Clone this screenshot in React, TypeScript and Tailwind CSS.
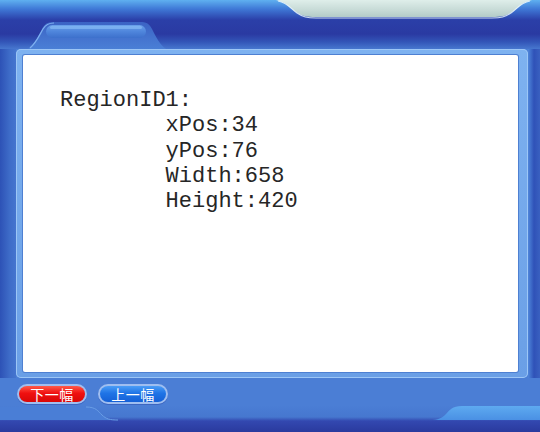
import React from 'react'

const lines = ['xPos:34', 'yPos:76', 'Width:658', 'Height:420']

function PillButton({ label, tone }: { label: string, tone: 'red' | 'blue' }) {
  const fill = tone === 'red'
    ? 'bg-[linear-gradient(to_bottom,#ff5a4a_0%,#f01010_45%,#d80808_100%)]'
    : 'bg-[linear-gradient(to_bottom,#4a9cf6_0%,#1f74e6_45%,#1560d6_100%)]'
  return (
    <div className="w-[70px] h-[20px] rounded-full bg-[#9fbef0] p-[2px] shadow-[0_1px_0_#3d66c0]">
      <div className={`h-full rounded-full ${fill} flex items-center justify-center text-white text-[14px] leading-none tracking-[0.5px] font-['Noto_Sans_CJK_SC',sans-serif]`}>
        {label}
      </div>
    </div>
  )
}

export default function App() {
  return (
    <div className="relative w-[540px] h-[432px] overflow-hidden bg-[#4b7ed5] font-['Liberation_Sans',sans-serif]">
      {/* top band */}
      <div className="relative h-[49px] bg-[linear-gradient(to_bottom,#5fb0f0_0px,#3f78d6_9px,#2b3fa8_20px,#2a3aa2_34px,#3356b8_42px,#4777cf_49px)]">
        {/* pale tab on the right */}
        <svg className="absolute left-[276px] top-0" width="256" height="20" viewBox="0 0 256 20">
          <defs>
            <linearGradient id="pale" x1="0" y1="0" x2="0" y2="1">
              <stop offset="0" stopColor="#dfeeea" />
              <stop offset="0.6" stopColor="#c6dad6" />
              <stop offset="1" stopColor="#b3cbc8" />
            </linearGradient>
          </defs>
          <path d="M0 0 C10 2 14 8 20 12 C26 16 30 17 40 17 L216 17 C226 17 230 16 236 12 C242 8 246 2 256 0 Z" fill="url(#pale)" />
          <path d="M2 1 C12 3 15 9 21 13 C27 17 31 18 40 18 L216 18 C225 18 229 17 235 13 C241 9 244 3 254 1" fill="none" stroke="#f4fbff" strokeWidth="1.2" opacity="0.8" />
        </svg>
        {/* left tab */}
        <svg className="absolute left-[28px] top-[21px]" width="138" height="28" viewBox="0 0 138 28">
          <defs>
            <linearGradient id="tab" x1="0" y1="0" x2="0" y2="1">
              <stop offset="0" stopColor="#3b63c4" />
              <stop offset="1" stopColor="#4a7fd6" />
            </linearGradient>
            <linearGradient id="bar" x1="0" y1="0" x2="0" y2="1">
              <stop offset="0" stopColor="#6aa0ea" />
              <stop offset="0.5" stopColor="#4f86dc" />
              <stop offset="1" stopColor="#3d70cc" />
            </linearGradient>
          </defs>
          <path d="M0 28 C6 24 10 16 14 8 C17 2 20 1 26 1 L112 1 C118 1 121 2 124 8 C128 16 132 24 138 28 Z" fill="url(#tab)" />
          <path d="M2 27 C8 22 11 15 15 8 C18 3 21 2 26 2" fill="none" stroke="#7fb0f0" strokeWidth="1.2" />
          <rect x="18" y="4" width="100" height="13" rx="6.5" fill="url(#bar)" />
          <rect x="22" y="5" width="92" height="3" rx="1.5" fill="#8cc0f6" opacity="0.6" />
        </svg>
      </div>

      {/* middle */}
      <div className="flex h-[329px]">
        <div className="w-[16px] bg-[linear-gradient(to_right,#2d52b6,#3e6cc8_60%,#4575cf)]" />
        <div className="w-[512px] rounded-[5px] bg-[linear-gradient(to_bottom,#7eb2f0,#6a9fe6)] pl-[7px] pt-[6px] pr-[10px] pb-[6px] shadow-[inset_0_0_0_1px_#9cc6f6]">
          <div className="h-full bg-white rounded-[2px] shadow-[0_0_0_1px_#4e80d2] pl-[37px] pt-[33px] text-[22px] leading-[25.25px] text-[#262626] font-['Liberation_Mono',monospace]">
            <div>RegionID1:</div>
            <div className="pl-[8ch]">
              {lines.map(l => <div key={l}>{l}</div>)}
            </div>
          </div>
        </div>
        <div className="w-[12px] bg-[linear-gradient(to_right,#4f86da,#2f52b8_50%,#3a60c0)]" />
      </div>

      {/* buttons */}
      <div className="flex gap-[11px] pl-[17px] pt-[6px] h-[27px]">
        <PillButton label="下一幅" tone="red" />
        <PillButton label="上一幅" tone="blue" />
      </div>

      {/* bottom strip */}
      <div className="relative h-[27px] bg-[linear-gradient(to_bottom,#4b7ed5_0px,#4677cf_12px,#3348b0_16px,#2a3a9e_27px)]">
        <svg className="absolute left-0 top-0" width="540" height="27" viewBox="0 0 540 27">
          <defs>
            <linearGradient id="rb" x1="0" y1="0" x2="0" y2="1">
              <stop offset="0" stopColor="#5eaaf0" />
              <stop offset="1" stopColor="#4a90e4" />
            </linearGradient>
          </defs>
          <path d="M0 2 L86 2 C96 2 98 6 102 10 C106 14 110 15 118 15 L0 15 Z" fill="#4a7ed6" />
          <path d="M86 2 C96 2 98 6 102 10 C106 14 110 15 118 15" fill="none" stroke="#6a9ee6" strokeWidth="1" />
          <path d="M540 1 L462 1 C452 1 450 5 446 9 C442 13 438 15 430 15 L540 15 Z" fill="url(#rb)" />
        </svg>
      </div>
    </div>
  )
}
